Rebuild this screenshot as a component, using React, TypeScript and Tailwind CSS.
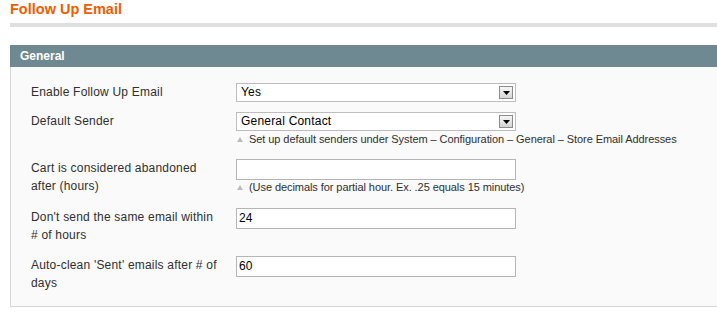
import React from "react"

const font = { fontFamily: '"Liberation Sans", Arial, sans-serif' }

const Arrow = () => (
  <div className="absolute right-[2px] top-[2px] w-[14px] h-[13px] border border-[#8c8c8c] bg-gradient-to-b from-[#f7f7f7] to-[#d4d4d4] flex items-center justify-center">
    <svg width="7" height="4" viewBox="0 0 7 4">
      <path d="M0 0h7L3.5 4z" fill="#000" />
    </svg>
  </div>
)

const Select = ({ value }: { value: string }) => (
  <div className="relative w-[280px] h-[19px] border border-[#bdbdbd] bg-white pl-[4px] text-[12px] tracking-[0.2px] leading-[17px] text-black">
    {value}
    <Arrow />
  </div>
)

const Input = ({ value }: { value?: string }) => (
  <div className="w-[280px] h-[21px] border border-[#b5b5b5] bg-white pl-[2px] text-[12px] tracking-[0.2px] leading-[19px] text-black">
    {value}
  </div>
)

const Note = ({ children, mt }: { children: React.ReactNode; mt: string }) => (
  <div className={`flex items-center pl-[1px] text-[11px] tracking-[-0.07px] leading-[13px] text-[#2f2f2f] ${mt}`}>
    <svg width="6" height="5" viewBox="0 0 6 5" className="mr-[6px]">
      <path d="M3 0L6 5H0z" fill="#bcbcbc" />
    </svg>
    {children}
  </div>
)

const Row = ({ label, mt, children }: { label: string; mt: string; children: React.ReactNode }) => (
  <div className={`flex items-start ${mt}`}>
    <div className="ml-[20px] w-[188px] mr-[17px] text-[12px] tracking-[0.2px] leading-[18px] text-[#2f2f2f]">{label}</div>
    <div>{children}</div>
  </div>
)

export default function App() {
  return (
    <div className="w-[717px] h-[313px] overflow-hidden bg-white pl-[10px]" style={font}>
      <h3 className="text-[14.5px] leading-[18px] font-bold text-[#eb5e00]">Follow Up Email</h3>
      <div className="mt-[5px] h-[4px] bg-[#dfdfdf]" />

      <div className="mt-[18px] h-[22px] bg-[#6f8992] pl-[10px] text-[12px] leading-[22px] font-bold text-white">
        General
      </div>
      <div className="bg-[#fafafa] border-l border-b border-[#d6d6d6] pt-[16px] pb-[14px]">
        <Row label="Enable Follow Up Email" mt="mt-0">
          <Select value="Yes" />
        </Row>
        <Row label="Default Sender" mt="mt-[10px]">
          <Select value="General Contact" />
          <Note mt="mt-[2px]">
            Set up default senders under System – Configuration – General – Store Email Addresses
          </Note>
        </Row>
        <Row label="Cart is considered abandoned after (hours)" mt="mt-[13px]">
          <Input />
          <Note mt="mt-[1px]">(Use decimals for partial hour. Ex. .25 equals 15 minutes)</Note>
        </Row>
        <Row label="Don't send the same email within # of hours" mt="mt-[13px]">
          <Input value="24" />
        </Row>
        <Row label="Auto-clean 'Sent' emails after # of days" mt="mt-[12px]">
          <Input value="60" />
        </Row>
      </div>
    </div>
  )
}
